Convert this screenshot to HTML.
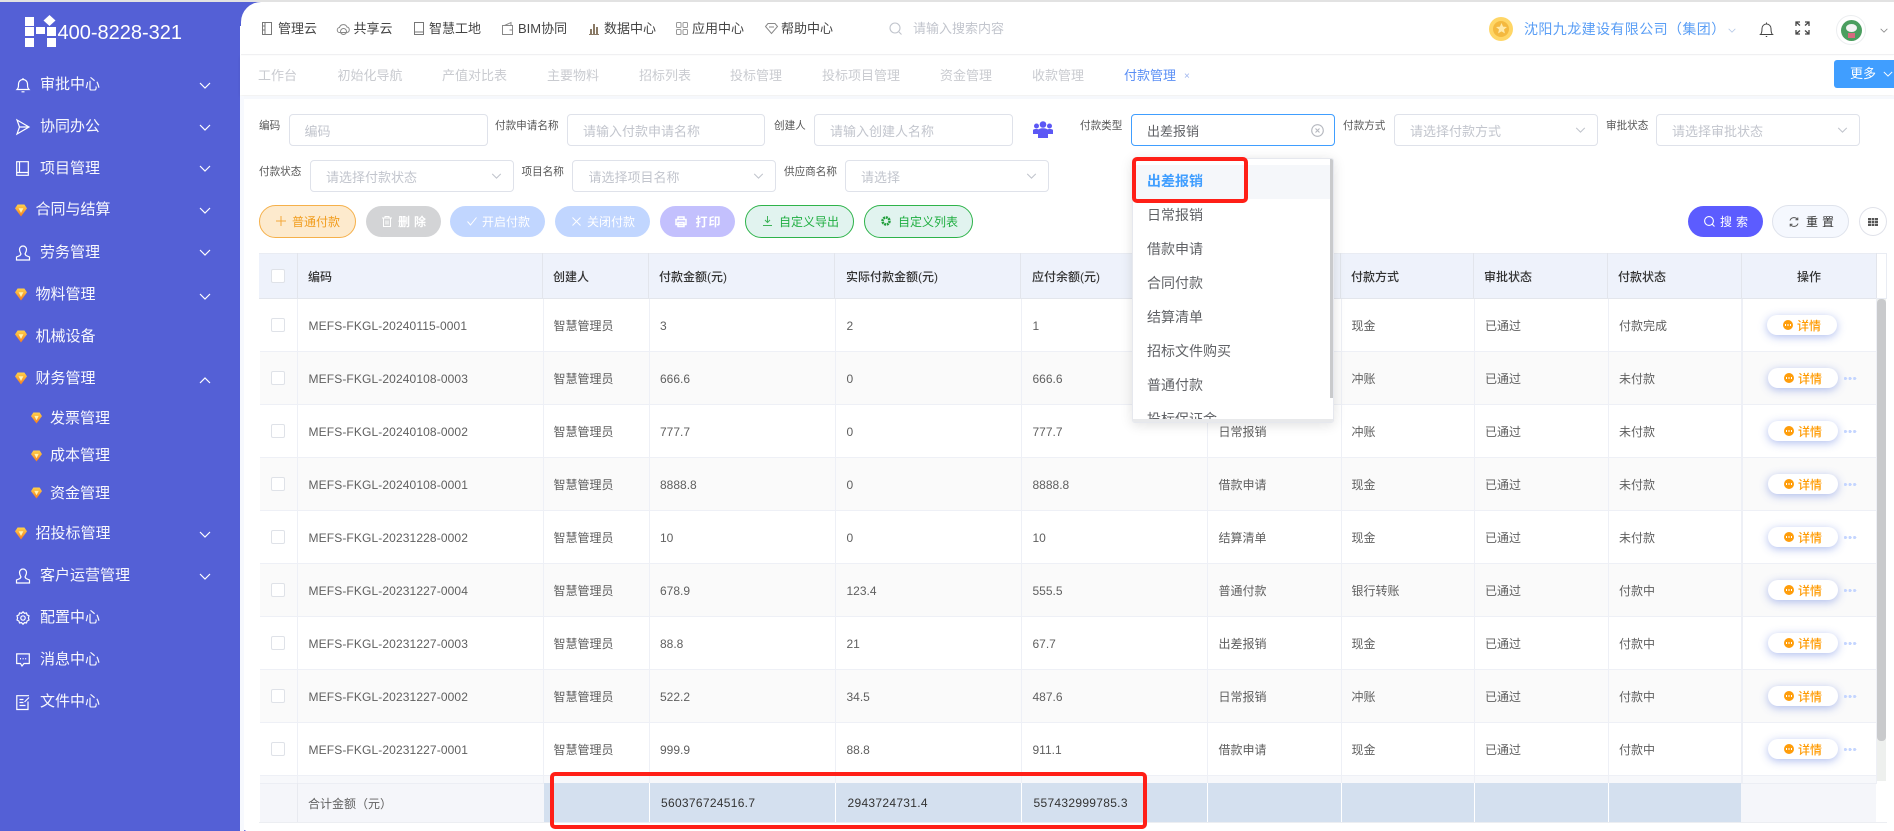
<!DOCTYPE html>
<html lang="zh-CN"><head><meta charset="utf-8"><title>付款管理</title>
<style>
*{box-sizing:border-box}
html,body{margin:0;padding:0;width:1894px;height:831px;overflow:hidden;background:#fff;font-family:"Liberation Sans","Noto Sans CJK SC",sans-serif}
.a{position:absolute}
.t{position:absolute;white-space:nowrap;line-height:20px;height:20px}
.side{left:0;top:2px;width:240px;height:829px;background:#5460d6}
.n{color:#fff;font-size:15px;opacity:.96}
svg{position:absolute;overflow:visible;fill:none}
.h{font-size:13px;color:#444;top:18.5px}
.tb{font-size:13px;color:#c9cbd0;top:66px}
.l{font-size:10.6px;color:#555}
.i{position:absolute;height:32px;border:1px solid #dfe2ea;border-radius:4px;background:#fff}
.p{font-size:13px;color:#c2c5cd}
.b{position:absolute;border-radius:17px}
.bt{font-size:12px}
.r{position:absolute;left:260px;width:1616px;height:53px;border-bottom:1px solid #eef0f6}
.o{background:#fff}.e{background:#fafafa}
.d{font-size:12px;color:#5f5f5f}
.th{font-size:12px;color:#333;font-weight:500;top:267px}
.vl{position:absolute;width:1px;top:298px;height:485px;background:#eef0f6}
.hl{position:absolute;width:1px;top:253px;height:45px;background:#e2e5ec}
.sl{position:absolute;width:1px;top:783px;height:39px;background:#fff}
.cb{position:absolute;left:271px;width:14px;height:14px;border:1px solid #dfe2e8;border-radius:2px;background:#fff}
.db{position:absolute;left:1768px;width:70px;height:20px;border-radius:10px;background:#fff;box-shadow:0 2px 9px rgba(80,110,220,.45)}
.dot{position:absolute;left:16px;top:5px;width:10px;height:10px;border-radius:50%;background:#ff9d0a}
.dot:after{content:"";position:absolute;left:2px;top:4px;width:6px;height:2px;background:repeating-linear-gradient(90deg,#fff 0 1px,transparent 1px 2.5px)}
.dt{position:absolute;left:30px;top:1px;line-height:20px;font-size:12px;color:#ff9a00;font-weight:500;white-space:nowrap}
.more{position:absolute;left:1844px;width:13px;height:3px;background:radial-gradient(circle at 1.5px 1.5px,#c4d5ff 1.5px,transparent 1.6px) 0 0/4.6px 3px repeat-x}
.dd{font-size:14px;color:#606266;left:14px}
</style></head><body>
<svg width="0" height="0" style="position:absolute"><defs>
<linearGradient id="g" x1="0" y1="0" x2="0" y2="1"><stop offset="0" stop-color="#ffd24a"/><stop offset="1" stop-color="#f57c1f"/></linearGradient>
<symbol id="gem" viewBox="0 0 12 13"><path d="M2.6 0.5h6.8L12 4.4 6 12.5 0 4.4z" fill="url(#g)"/><path d="M3.6 4.2h4.8L6 9z" fill="#fff3b0"/></symbol>
<symbol id="chev" viewBox="0 0 12 7"><path d="M1 1l5 5 5-5" stroke="currentColor" stroke-width="1.2" fill="none"/></symbol>
</defs></svg>

<div class="a" style="left:0;top:0;width:1894px;height:2px;background:#e2e2e2"></div>
<div class="a side"></div>
<div class="a" style="left:240px;top:2px;width:24px;height:24px;background:#5460d6"></div>
<div class="a" style="left:240px;top:820px;width:6px;height:11px;background:#5460d6"></div>
<div class="a" style="left:240px;top:815px;width:10px;height:16px;background:#fff;border-radius:0 0 0 8px"></div>

<!-- logo -->
<svg style="left:25px;top:15px" width="31" height="32" viewBox="0 0 31 32"><g fill="#fff">
<rect x="0" y="2" width="9" height="9"/><rect x="0" y="12" width="9" height="9"/><rect x="0" y="23" width="9" height="9"/>
<rect x="11" y="12" width="9" height="7"/><rect x="22" y="12" width="9" height="9"/><rect x="22" y="23" width="9" height="9"/>
<path d="M24.500 0l6 5.500-6 5.500-6-5.500z"/></g></svg>
<div class="t" style="left:57.500px;top:21px;font-size:20px;line-height:24px;height:24px;color:#fff">400-8228-321</div>

<!-- nav -->
<div class="a" style="left:0;top:1px;width:240px;height:720px">
<svg style="left:16px;top:76px" width="14" height="16" viewBox="0 0 14 16" stroke="#fff" stroke-width="1.200"><path d="M1 12.500c1.500-1.500 1.500-3 1.500-5.500a4.500 4.500 0 0 1 9 0c0 2.500 0 4 1.500 5.500z"/><path d="M5.500 14.800h3M7 1v1"/></svg>
<div class="t n" style="left:40px;top:74px">审批中心</div>
<svg style="left:16px;top:118px" width="14" height="16" viewBox="0 0 14 16" stroke="#fff" stroke-width="1.200"><path d="M1 1l12 7-12 7 2.500-7zM3.500 8H13"/></svg>
<div class="t n" style="left:40px;top:116px">协同办公</div>
<svg style="left:16px;top:160px" width="13" height="15" viewBox="0 0 13 15" stroke="#fff" stroke-width="1.200"><path d="M.7.700h11.600v13.600H.7zM.7 11.500h11.600M3.500.7v10.800"/></svg>
<div class="t n" style="left:40px;top:157.500px">项目管理</div>
<svg style="left:15px;top:203px" width="12" height="13"><use href="#gem"/></svg>
<div class="t n" style="left:35.500px;top:199px">合同与结算</div>
<svg style="left:15px;top:244px" width="16" height="16" viewBox="0 0 16 16" stroke="#fff" stroke-width="1.200"><path d="M8 1a3.500 3.500 0 0 1 3.500 3.500c0 2-1 3.500-1.500 4.500l1 1.500 3.500 1.500v3H1.500v-3l3.500-1.500 1-1.500c-.5-1-1.500-2.500-1.500-4.500A3.500 3.500 0 0 1 8 1z"/></svg>
<div class="t n" style="left:40px;top:241.500px">劳务管理</div>
<svg style="left:15px;top:287px" width="12" height="13"><use href="#gem"/></svg>
<div class="t n" style="left:35.500px;top:283.500px">物料管理</div>
<svg style="left:15px;top:329px" width="12" height="13"><use href="#gem"/></svg>
<div class="t n" style="left:35.500px;top:325.500px">机械设备</div>
<svg style="left:15px;top:371px" width="12" height="13"><use href="#gem"/></svg>
<div class="t n" style="left:35.500px;top:367.500px">财务管理</div>
<svg style="left:30.500px;top:411px" width="11" height="12"><use href="#gem"/></svg>
<div class="t n" style="left:50px;top:407.500px">发票管理</div>
<svg style="left:30.500px;top:449px" width="11" height="12"><use href="#gem"/></svg>
<div class="t n" style="left:50px;top:445px">成本管理</div>
<svg style="left:30.500px;top:486px" width="11" height="12"><use href="#gem"/></svg>
<div class="t n" style="left:50px;top:482.500px">资金管理</div>
<svg style="left:15px;top:526px" width="12" height="13"><use href="#gem"/></svg>
<div class="t n" style="left:35.500px;top:522.500px">招投标管理</div>
<svg style="left:15px;top:567px" width="16" height="16" viewBox="0 0 16 16" stroke="#fff" stroke-width="1.200"><path d="M8 1a3.500 3.500 0 0 1 3.500 3.500c0 2-1 3.500-1.500 4.500l1 1.500 3.500 1.500v3H1.500v-3l3.500-1.500 1-1.500c-.5-1-1.500-2.500-1.500-4.500A3.500 3.500 0 0 1 8 1z"/></svg>
<div class="t n" style="left:40px;top:565px">客户运营管理</div>
<svg style="left:16px;top:610px" width="14" height="14" viewBox="0 0 14 14" stroke="#fff" stroke-width="1.200"><path d="M7 .8l1.500 1.500 2-.4.6 2 1.900.9-.6 2.200.6 2-1.900 1-.6 1.900-2-.3L7 13.200l-1.500-1.600-2 .3-.6-1.900-1.900-1 .6-2-.6-2.200 1.900-.9.6-2 2 .4z"/><circle cx="7" cy="7" r="2.200"/></svg>
<div class="t n" style="left:40px;top:607px">配置中心</div>
<svg style="left:16px;top:652px" width="14" height="14" viewBox="0 0 14 14" stroke="#fff" stroke-width="1.200"><path d="M.7.900h12.600v9.600H8l-2 2.500-1.500-2.500H.7z"/><path d="M4 5.700h1M6.600 5.700h1M9.200 5.700h1" stroke-width="1.400"/></svg>
<div class="t n" style="left:40px;top:649px">消息中心</div>
<svg style="left:16px;top:694px" width="14" height="15" viewBox="0 0 14 15" stroke="#fff" stroke-width="1.200"><path d="M12 6.500v8H.8V.7H13M3.500 4.500h4M3.500 7.500h4M3.500 10.500h6M8.500 7l4.500-4.500"/></svg>
<div class="t n" style="left:40px;top:691px">文件中心</div>
<svg style="left:199px;top:81px;color:#fff" width="12" height="7"><use href="#chev"/></svg>
<svg style="left:199px;top:123px;color:#fff" width="12" height="7"><use href="#chev"/></svg>
<svg style="left:199px;top:164px;color:#fff" width="12" height="7"><use href="#chev"/></svg>
<svg style="left:199px;top:206px;color:#fff" width="12" height="7"><use href="#chev"/></svg>
<svg style="left:199px;top:248px;color:#fff" width="12" height="7"><use href="#chev"/></svg>
<svg style="left:199px;top:292px;color:#fff" width="12" height="7"><use href="#chev"/></svg>
<svg style="left:199px;top:376px;color:#fff;transform:rotate(180deg)" width="12" height="7"><use href="#chev"/></svg>
<svg style="left:199px;top:530px;color:#fff" width="12" height="7"><use href="#chev"/></svg>
<svg style="left:199px;top:572px;color:#fff" width="12" height="7"><use href="#chev"/></svg>
</div>

<!-- header -->
<div class="a" style="left:241px;top:2px;width:1653px;height:53px;background:#fff;border-top-left-radius:20px;border-bottom:1px solid #f0f1f3"></div>
<svg style="left:262px;top:22px" width="10" height="13" viewBox="0 0 10 13" stroke="#777"><path d="M.5.500h9v12h-9zM3 .5v12M.5 4h2M.5 8h2"/></svg>
<div class="t h" style="left:278px">管理云</div>
<svg style="left:337px;top:22px" width="13" height="13" viewBox="0 0 13 13" stroke="#888"><path d="M3 10.500a2.500 2.500 0 0 1-.5-5A4 4 0 0 1 10 5a2.800 2.800 0 0 1 0 5.500z"/><circle cx="6.500" cy="9.500" r="3"/></svg>
<div class="t h" style="left:353.500px">共享云</div>
<svg style="left:414px;top:22px" width="10" height="13" viewBox="0 0 10 13" stroke="#777"><path d="M.5.500h9v12h-9zM.5 10h9"/></svg>
<div class="t h" style="left:429px">智慧工地</div>
<svg style="left:502px;top:22px" width="11" height="13" viewBox="0 0 11 13" stroke="#888"><path d="M.5 3.500h10v9H.5zM2.500 3.500L9 .5v3M7.500 8h3"/></svg>
<div class="t h" style="left:518px">BIM协同</div>
<svg style="left:589px;top:23px" width="10" height="12" viewBox="0 0 10 12"><path d="M0 11h10v1H0zM1 6h2v5H1zM4 1h2v10H4zM7 4h2v7H7z" fill="#8a7a66"/></svg>
<div class="t h" style="left:604px">数据中心</div>
<svg style="left:676px;top:22px" width="12" height="13" viewBox="0 0 12 13" stroke="#999"><rect x=".5" y=".5" width="4.500" height="5" rx="1"/><rect x="7" y=".5" width="4.500" height="5" rx="1"/><rect x=".5" y="7.500" width="4.500" height="5" rx="1"/><rect x="7" y="7.500" width="4.500" height="5" rx="1"/></svg>
<div class="t h" style="left:692px">应用中心</div>
<svg style="left:765px;top:23px" width="13" height="11" viewBox="0 0 13 11" stroke="#888"><path d="M3 .5h7l2.500 3L6.500 10.500.5 3.500zM4 4h5"/></svg>
<div class="t h" style="left:781px">帮助中心</div>
<svg style="left:889px;top:22px" width="13" height="13" viewBox="0 0 13 13" stroke="#c0c4cc" stroke-width="1.100"><circle cx="6" cy="6" r="5"/><path d="M10 10l2.500 2.500"/></svg>
<div class="t p" style="left:913px;top:19px">请输入搜索内容</div>
<div class="a" style="left:1489px;top:17px;width:24px;height:24px;border-radius:50%;background:#ffd666"></div>
<div class="a" style="left:1493px;top:21px;width:16px;height:16px;border-radius:50%;background:#f4b93f"></div>
<svg style="left:1496px;top:23px" width="11" height="11" viewBox="0 0 11 11"><path d="M5.500 0l1.600 3.600 3.900.4-3 2.500.9 3.900-3.400-2-3.400 2 .9-3.900-3-2.500 3.900-.4z" fill="#ffe9a8"/></svg>
<div class="t" style="left:1524px;top:19px;font-size:14px;color:#5a9ef5;letter-spacing:.4px">沈阳九龙建设有限公司（集团）</div>
<svg style="left:1728px;top:28px;color:#b5c8e6" width="8" height="5"><use href="#chev"/></svg>
<svg style="left:1760px;top:22px" width="13" height="15" viewBox="0 0 13 15" stroke="#444"><path d="M.5 12.500c1.300-1 1.500-2.500 1.500-6a4.500 4.500 0 0 1 9 0c0 3.500.2 5 1.500 6zM5.800 14.500h1.400M6.500.5v1"/></svg>
<svg style="left:1795px;top:21px" width="15" height="14" viewBox="0 0 15 14" stroke="#444" stroke-width="1.300"><path d="M1 5V1h4M10 1h4v4M1 9v4h4M10 13h4V9M1.500 1.500l3.500 3M13.500 1.500L10 4.500M1.500 12.500l3.500-3M13.500 12.500L10 9.500"/></svg>
<div class="a" style="left:1836px;top:15px;width:30px;height:30px;border-radius:50%;border:1px solid #eceef0;background:#fff"></div>
<div class="a" style="left:1841px;top:20px;width:21px;height:21px;border-radius:50%;background:#4b9e5f"></div>
<div class="a" style="left:1846px;top:24px;width:11px;height:8px;border-radius:50%;background:#f4f4f4"></div>
<div class="a" style="left:1848px;top:33px;width:7px;height:5px;background:#d86a80"></div>
<svg style="left:1880px;top:28px;color:#888" width="8" height="5"><use href="#chev"/></svg>

<!-- tabs -->
<div class="a" style="left:240px;top:56px;width:1654px;height:39px;background:#fff;box-shadow:0 1px 3px rgba(0,0,0,.08)"></div>
<div class="a" style="left:240px;top:96px;width:1654px;height:3px;background:#f6f8fc"></div>
<div class="a" style="left:240px;top:96px;width:4px;height:735px;background:#f7f9fe"></div>
<div class="t tb" style="left:258px">工作台</div>
<div class="t tb" style="left:337.500px">初始化导航</div>
<div class="t tb" style="left:442px">产值对比表</div>
<div class="t tb" style="left:547px">主要物料</div>
<div class="t tb" style="left:639px">招标列表</div>
<div class="t tb" style="left:730px">投标管理</div>
<div class="t tb" style="left:822px">投标项目管理</div>
<div class="t tb" style="left:940px">资金管理</div>
<div class="t tb" style="left:1032px">收款管理</div>
<div class="t tb" style="left:1124px;color:#5b8ff5">付款管理</div>
<div class="t" style="left:1184px;top:66.500px;font-size:10px;color:#9db4ee">×</div>
<div class="a" style="left:1834px;top:60px;width:60px;height:28px;background:#409eff;border-radius:3px 0 0 3px"></div>
<div class="t" style="left:1850px;top:64px;font-size:13px;color:#fff">更多</div>
<svg style="left:1883px;top:71px;color:#fff" width="10" height="6"><use href="#chev"/></svg>

<!-- filter row 1 -->
<div class="t l" style="left:259px;top:116px">编码</div>
<div class="i" style="left:289px;top:114px;width:199px"></div>
<div class="t p" style="left:304.500px;top:122px">编码</div>
<div class="t l" style="left:495px;top:116px">付款申请名称</div>
<div class="i" style="left:567px;top:114px;width:198px"></div>
<div class="t p" style="left:583px;top:122px">请输入付款申请名称</div>
<div class="t l" style="left:774px;top:116px">创建人</div>
<div class="i" style="left:814px;top:114px;width:199px"></div>
<div class="t p" style="left:830px;top:122px">请输入创建人名称</div>
<svg style="left:1033px;top:121px" width="20" height="17" viewBox="0 0 20 17"><g fill="#5c58f5"><circle cx="10" cy="3.500" r="3.300"/><circle cx="3.500" cy="5" r="2.500"/><circle cx="16.500" cy="5" r="2.500"/><path d="M0 9.500C0 8 2 8 3.500 8s3 .5 3 1.500V13H0zM13.500 9.500c0-1 1.500-1.500 3-1.500S20 8 20 9.500V13h-6.500z"/><path d="M5 10c0-2 2-2.700 5-2.700s5 .7 5 2.700v7H5z"/></g></svg>
<div class="t l" style="left:1080px;top:116px">付款类型</div>
<div class="i" style="left:1131px;top:114px;width:204px;border-color:#409eff"></div>
<div class="t" style="left:1147px;top:122px;font-size:13px;color:#606266">出差报销</div>
<svg style="left:1311px;top:124px" width="13" height="13" viewBox="0 0 13 13" stroke="#b5b8bf" stroke-width="1.100"><circle cx="6.500" cy="6.500" r="5.800"/><path d="M4.500 4.500l4 4M8.500 4.500l-4 4"/></svg>
<div class="t l" style="left:1343px;top:116px">付款方式</div>
<div class="i" style="left:1394px;top:114px;width:204px"></div>
<div class="t p" style="left:1410px;top:122px">请选择付款方式</div>
<svg style="left:1575px;top:127px;color:#c0c4cc" width="11" height="6"><use href="#chev"/></svg>
<div class="t l" style="left:1606px;top:116px">审批状态</div>
<div class="i" style="left:1656px;top:114px;width:204px"></div>
<div class="t p" style="left:1672px;top:122px">请选择审批状态</div>
<svg style="left:1837px;top:127px;color:#c0c4cc" width="11" height="6"><use href="#chev"/></svg>

<!-- filter row 2 -->
<div class="t l" style="left:259px;top:162px">付款状态</div>
<div class="i" style="left:310px;top:160px;width:204px"></div>
<div class="t p" style="left:326px;top:167.500px">请选择付款状态</div>
<svg style="left:491px;top:173px;color:#c0c4cc" width="11" height="6"><use href="#chev"/></svg>
<div class="t l" style="left:521.500px;top:162px">项目名称</div>
<div class="i" style="left:572px;top:160px;width:204px"></div>
<div class="t p" style="left:588.500px;top:167.500px">请选择项目名称</div>
<svg style="left:752.500px;top:173px;color:#c0c4cc" width="11" height="6"><use href="#chev"/></svg>
<div class="t l" style="left:784px;top:162px">供应商名称</div>
<div class="i" style="left:845px;top:160px;width:204px"></div>
<div class="t p" style="left:861px;top:167.500px">请选择</div>
<svg style="left:1026px;top:173px;color:#c0c4cc" width="11" height="6"><use href="#chev"/></svg>

<!-- buttons -->
<div class="b" style="left:259px;top:205px;width:97px;height:33px;background:#fdeacd;border:1px solid #f5b04a"></div>
<svg style="left:276px;top:216px" width="10" height="10" viewBox="0 0 10 10" stroke="#f3a83a"><path d="M5 0v10M0 5h10"/></svg>
<div class="t bt" style="left:292px;top:212px;color:#f19d1e">普通付款</div>
<div class="b" style="left:366px;top:206px;width:75px;height:31px;background:#d3d4d6"></div>
<svg style="left:382px;top:216px" width="10" height="11" viewBox="0 0 10 11" stroke="#fff"><path d="M0 2h10M3 2V.5h4V2M1.500 2v8.500h7V2M4 4.500v4M6 4.500v4"/></svg>
<div class="t bt" style="left:398px;top:212px;color:#fff;letter-spacing:4px;font-weight:700">删除</div>
<div class="b" style="left:450px;top:206px;width:95px;height:31px;background:#c1d6ff"></div>
<svg style="left:467px;top:217px" width="10" height="9" viewBox="0 0 10 9" stroke="#fff"><path d="M.5 4.500l3 3.500L9.500.5"/></svg>
<div class="t bt" style="left:482px;top:212px;color:#fff">开启付款</div>
<div class="b" style="left:555px;top:206px;width:95px;height:31px;background:#c1d6ff"></div>
<svg style="left:572px;top:217px" width="9" height="9" viewBox="0 0 9 9" stroke="#fff"><path d="M.5.500l8 8M8.500.500l-8 8"/></svg>
<div class="t bt" style="left:587px;top:212px;color:#fff">关闭付款</div>
<div class="b" style="left:660px;top:206px;width:75px;height:31px;background:#c3c0fd"></div>
<svg style="left:675px;top:216px" width="12" height="11" viewBox="0 0 12 11" stroke="#fff" stroke-width="1.500"><path d="M3 3V1h6v2M1 3.500h10v5H1zM3 6.500h6v4H3z"/></svg>
<div class="t bt" style="left:695.500px;top:212px;color:#fff;letter-spacing:1px;font-weight:700">打印</div>
<div class="b" style="left:745px;top:205px;width:109px;height:33px;background:#e1f3ef;border:1px solid #2eb34a"></div>
<svg style="left:763px;top:216px" width="9" height="10" viewBox="0 0 9 10" stroke="#3fb35a"><path d="M4.500 0v6M2 4l2.500 2.500L7 4M0 9.500h9"/></svg>
<div class="t bt" style="left:779px;top:212px;color:#1fae41">自定义导出</div>
<div class="b" style="left:864px;top:205px;width:109px;height:33px;background:#e1f3ef;border:1px solid #2eb34a"></div>
<svg style="left:881px;top:216px" width="10" height="10" viewBox="0 0 10 10"><circle cx="5" cy="5" r="3.500" stroke="#1f9e3a" stroke-width="2.500" stroke-dasharray="2 .7"/></svg>
<div class="t bt" style="left:898px;top:212px;color:#1fae41">自定义列表</div>
<div class="b" style="left:1688px;top:206px;width:75px;height:31px;background:#5c5cff"></div>
<svg style="left:1704px;top:216px" width="11" height="11" viewBox="0 0 11 11" stroke="#fff" stroke-width="1.100"><circle cx="5" cy="5" r="4.400"/><path d="M8.300 8.300L10.500 10.500"/></svg>
<div class="t bt" style="left:1720px;top:212px;color:#fff;letter-spacing:4px">搜索</div>
<div class="b" style="left:1772px;top:205px;width:77px;height:33px;background:#f5f8fe;border:1px solid #dfe3ec"></div>
<svg style="left:1789px;top:217px" width="10" height="10" viewBox="0 0 10 10" stroke="#555"><path d="M1 3.500A4.200 4.200 0 0 1 8.500 2.500M9 6.500A4.200 4.200 0 0 1 1.500 7.500M8.800 .5v2.300H6.500M1.200 9.500V7.200h2.300"/></svg>
<div class="t bt" style="left:1806px;top:212px;color:#333;letter-spacing:4px">重置</div>
<div class="a" style="left:1859px;top:207px;width:28px;height:29px;border-radius:50%;border:1px solid #e0e2ea;background:#fff"></div>
<svg style="left:1868px;top:218px" width="10" height="8" viewBox="0 0 10 8"><path d="M0 0h10v8H0z" fill="#555"/><path d="M3.300 0v8M6.600 0v8M0 2.700h10M0 5.300h10" stroke="#fff" stroke-width=".6"/></svg>

<!-- table header -->
<div class="a" style="left:259px;top:253px;width:1617px;height:46px;background:#eef2fb;border-top:1px solid #e9ecf3;border-bottom:1px solid #e3e6ec"></div>
<div class="a" style="left:1876px;top:253px;width:11px;height:46px;border:1px solid #e9ecf3;border-left:0;background:#fff"></div>
<div class="hl" style="left:297px"></div><div class="hl" style="left:542px"></div><div class="hl" style="left:648px"></div><div class="hl" style="left:834px"></div><div class="hl" style="left:1020px"></div><div class="hl" style="left:1207px"></div><div class="hl" style="left:1340px"></div><div class="hl" style="left:1473px"></div><div class="hl" style="left:1607px"></div><div class="hl" style="left:1741px"></div><div class="hl" style="left:1876px"></div>
<div class="cb" style="top:269px"></div>
<div class="t th" style="left:308px">编码</div>
<div class="t th" style="left:553px">创建人</div>
<div class="t th" style="left:659px">付款金额(元)</div>
<div class="t th" style="left:846px">实际付款金额(元)</div>
<div class="t th" style="left:1032px">应付余额(元)</div>
<div class="t th" style="left:1351px">付款方式</div>
<div class="t th" style="left:1484px">审批状态</div>
<div class="t th" style="left:1618px">付款状态</div>
<div class="t th" style="left:1797px">操作</div>

<!-- rows -->
<div class="r o" style="top:299px"></div>
<div class="r e" style="top:352px"></div>
<div class="r o" style="top:405px"></div>
<div class="r e" style="top:458px"></div>
<div class="r o" style="top:511px"></div>
<div class="r e" style="top:564px"></div>
<div class="r o" style="top:617px"></div>
<div class="r e" style="top:670px"></div>
<div class="r o" style="top:723px"></div>
<div class="a" style="left:260px;top:776px;width:1616px;height:7px;background:#f7f8fb"></div>
<div class="vl" style="left:297px;top:299px"></div><div class="vl" style="left:543px;top:299px"></div><div class="vl" style="left:649px;top:299px"></div><div class="vl" style="left:835px;top:299px"></div><div class="vl" style="left:1021px;top:299px"></div><div class="vl" style="left:1207px;top:299px"></div><div class="vl" style="left:1341px;top:299px"></div><div class="vl" style="left:1474px;top:299px"></div><div class="vl" style="left:1608px;top:299px"></div><div class="vl" style="left:1741px;top:299px;width:2px"></div><div class="vl" style="left:1876px;top:299px"></div>
<div class="cb" style="top:318px"></div><div class="cb" style="top:371px"></div><div class="cb" style="top:424px"></div><div class="cb" style="top:477px"></div><div class="cb" style="top:530px"></div><div class="cb" style="top:583px"></div><div class="cb" style="top:636px"></div><div class="cb" style="top:689px"></div><div class="cb" style="top:742px"></div>

<div class="t d" style="left:308.500px;top:315.500px;letter-spacing:.12px">MEFS-FKGL-20240115-0001</div><div class="t d" style="left:553.500px;top:315.500px">智慧管理员</div><div class="t d" style="left:660px;top:315.500px">3</div><div class="t d" style="left:846.500px;top:315.500px">2</div><div class="t d" style="left:1032.500px;top:315.500px">1</div><div class="t d" style="left:1351.500px;top:315.500px">现金</div><div class="t d" style="left:1485px;top:315.500px">已通过</div><div class="t d" style="left:1619px;top:315.500px">付款完成</div>
<div class="t d" style="left:308.500px;top:368.500px;letter-spacing:.12px">MEFS-FKGL-20240108-0003</div><div class="t d" style="left:553.500px;top:368.500px">智慧管理员</div><div class="t d" style="left:660px;top:368.500px">666.6</div><div class="t d" style="left:846.500px;top:368.500px">0</div><div class="t d" style="left:1032.500px;top:368.500px">666.6</div><div class="t d" style="left:1351.500px;top:368.500px">冲账</div><div class="t d" style="left:1485px;top:368.500px">已通过</div><div class="t d" style="left:1619px;top:368.500px">未付款</div>
<div class="t d" style="left:308.500px;top:421.500px;letter-spacing:.12px">MEFS-FKGL-20240108-0002</div><div class="t d" style="left:553.500px;top:421.500px">智慧管理员</div><div class="t d" style="left:660px;top:421.500px">777.7</div><div class="t d" style="left:846.500px;top:421.500px">0</div><div class="t d" style="left:1032.500px;top:421.500px">777.7</div><div class="t d" style="left:1218.500px;top:421.500px">日常报销</div><div class="t d" style="left:1351.500px;top:421.500px">冲账</div><div class="t d" style="left:1485px;top:421.500px">已通过</div><div class="t d" style="left:1619px;top:421.500px">未付款</div>
<div class="t d" style="left:308.500px;top:474.500px;letter-spacing:.12px">MEFS-FKGL-20240108-0001</div><div class="t d" style="left:553.500px;top:474.500px">智慧管理员</div><div class="t d" style="left:660px;top:474.500px">8888.8</div><div class="t d" style="left:846.500px;top:474.500px">0</div><div class="t d" style="left:1032.500px;top:474.500px">8888.8</div><div class="t d" style="left:1218.500px;top:474.500px">借款申请</div><div class="t d" style="left:1351.500px;top:474.500px">现金</div><div class="t d" style="left:1485px;top:474.500px">已通过</div><div class="t d" style="left:1619px;top:474.500px">未付款</div>
<div class="t d" style="left:308.500px;top:527.500px;letter-spacing:.12px">MEFS-FKGL-20231228-0002</div><div class="t d" style="left:553.500px;top:527.500px">智慧管理员</div><div class="t d" style="left:660px;top:527.500px">10</div><div class="t d" style="left:846.500px;top:527.500px">0</div><div class="t d" style="left:1032.500px;top:527.500px">10</div><div class="t d" style="left:1218.500px;top:527.500px">结算清单</div><div class="t d" style="left:1351.500px;top:527.500px">现金</div><div class="t d" style="left:1485px;top:527.500px">已通过</div><div class="t d" style="left:1619px;top:527.500px">未付款</div>
<div class="t d" style="left:308.500px;top:580.500px;letter-spacing:.12px">MEFS-FKGL-20231227-0004</div><div class="t d" style="left:553.500px;top:580.500px">智慧管理员</div><div class="t d" style="left:660px;top:580.500px">678.9</div><div class="t d" style="left:846.500px;top:580.500px">123.4</div><div class="t d" style="left:1032.500px;top:580.500px">555.5</div><div class="t d" style="left:1218.500px;top:580.500px">普通付款</div><div class="t d" style="left:1351.500px;top:580.500px">银行转账</div><div class="t d" style="left:1485px;top:580.500px">已通过</div><div class="t d" style="left:1619px;top:580.500px">付款中</div>
<div class="t d" style="left:308.500px;top:633.500px;letter-spacing:.12px">MEFS-FKGL-20231227-0003</div><div class="t d" style="left:553.500px;top:633.500px">智慧管理员</div><div class="t d" style="left:660px;top:633.500px">88.8</div><div class="t d" style="left:846.500px;top:633.500px">21</div><div class="t d" style="left:1032.500px;top:633.500px">67.7</div><div class="t d" style="left:1218.500px;top:633.500px">出差报销</div><div class="t d" style="left:1351.500px;top:633.500px">现金</div><div class="t d" style="left:1485px;top:633.500px">已通过</div><div class="t d" style="left:1619px;top:633.500px">付款中</div>
<div class="t d" style="left:308.500px;top:686.500px;letter-spacing:.12px">MEFS-FKGL-20231227-0002</div><div class="t d" style="left:553.500px;top:686.500px">智慧管理员</div><div class="t d" style="left:660px;top:686.500px">522.2</div><div class="t d" style="left:846.500px;top:686.500px">34.5</div><div class="t d" style="left:1032.500px;top:686.500px">487.6</div><div class="t d" style="left:1218.500px;top:686.500px">日常报销</div><div class="t d" style="left:1351.500px;top:686.500px">冲账</div><div class="t d" style="left:1485px;top:686.500px">已通过</div><div class="t d" style="left:1619px;top:686.500px">付款中</div>
<div class="t d" style="left:308.500px;top:739.500px;letter-spacing:.12px">MEFS-FKGL-20231227-0001</div><div class="t d" style="left:553.500px;top:739.500px">智慧管理员</div><div class="t d" style="left:660px;top:739.500px">999.9</div><div class="t d" style="left:846.500px;top:739.500px">88.8</div><div class="t d" style="left:1032.500px;top:739.500px">911.1</div><div class="t d" style="left:1218.500px;top:739.500px">借款申请</div><div class="t d" style="left:1351.500px;top:739.500px">现金</div><div class="t d" style="left:1485px;top:739.500px">已通过</div><div class="t d" style="left:1619px;top:739.500px">付款中</div>

<!-- detail buttons -->
<div class="db" style="left:1767px;top:315px"><span class="dot"></span><span class="dt">详情</span></div>
<div class="db" style="top:368px"><span class="dot"></span><span class="dt">详情</span></div><div class="more" style="top:377px"></div>
<div class="db" style="top:421px"><span class="dot"></span><span class="dt">详情</span></div><div class="more" style="top:430px"></div>
<div class="db" style="top:474px"><span class="dot"></span><span class="dt">详情</span></div><div class="more" style="top:483px"></div>
<div class="db" style="top:527px"><span class="dot"></span><span class="dt">详情</span></div><div class="more" style="top:536px"></div>
<div class="db" style="top:580px"><span class="dot"></span><span class="dt">详情</span></div><div class="more" style="top:589px"></div>
<div class="db" style="top:633px"><span class="dot"></span><span class="dt">详情</span></div><div class="more" style="top:642px"></div>
<div class="db" style="top:686px"><span class="dot"></span><span class="dt">详情</span></div><div class="more" style="top:695px"></div>
<div class="db" style="top:739px"><span class="dot"></span><span class="dt">详情</span></div><div class="more" style="top:748px"></div>

<!-- table scrollbar -->
<div class="a" style="left:1877px;top:299px;width:9px;height:482px;background:#eef0ee"></div>
<div class="a" style="left:1877px;top:299px;width:9px;height:442px;background:#c9cacc;border-radius:4px"></div>

<!-- summary -->
<div class="a" style="left:260px;top:783px;width:1616px;height:39px;background:#f5f6fa;border-top:1px solid #eceef4"></div>
<div class="a" style="left:544px;top:783px;width:1197px;height:39px;background:#d4e0ef"></div>
<div class="sl" style="left:649px"></div><div class="sl" style="left:835px"></div><div class="sl" style="left:1021px"></div><div class="sl" style="left:1207px"></div><div class="sl" style="left:1341px"></div><div class="sl" style="left:1474px"></div><div class="sl" style="left:1608px"></div>
<div class="a" style="left:297px;top:783px;width:1px;height:39px;background:#e8eaf0"></div>
<div class="a" style="left:259px;top:822px;width:1628px;height:1px;background:#eceef2"></div>
<div class="t d" style="left:308px;top:794px">合计金额（元）</div>
<div class="t" style="left:661px;top:793px;font-size:12px;color:#333;letter-spacing:.3px">560376724516.7</div>
<div class="t" style="left:847.500px;top:793px;font-size:12px;color:#333;letter-spacing:.3px">2943724731.4</div>
<div class="t" style="left:1033.500px;top:793px;font-size:12px;color:#333;letter-spacing:.3px">557432999785.3</div>
<div class="a" style="left:550px;top:772px;width:597px;height:57px;border:4px solid #ff1f17;border-radius:5px"></div>

<!-- dropdown -->
<div class="a" style="left:1132px;top:158px;width:202px;height:265px;background:#fff;border:1px solid #e6e8ee;border-radius:3px;box-shadow:0 2px 12px rgba(0,0,0,.12);overflow:hidden">
  <div class="a" style="left:0;top:6px;width:200px;height:34px;background:#f5f7fa"></div>
  <div class="t dd" style="top:12px;color:#409eff;font-weight:700">出差报销</div>
  <div class="t dd" style="top:46px">日常报销</div>
  <div class="t dd" style="top:80px">借款申请</div>
  <div class="t dd" style="top:114px">合同付款</div>
  <div class="t dd" style="top:148px">结算清单</div>
  <div class="t dd" style="top:182px">招标文件购买</div>
  <div class="t dd" style="top:216px">普通付款</div>
  <div class="t dd" style="top:250px">投标保证金</div>
  <div class="a" style="left:197px;top:0;width:4px;height:239px;background:#c9cacc"></div>
  <div class="a" style="left:0;top:260px;width:200px;height:4px;background:#e8e9eb"></div>
</div>
<div class="a" style="left:1132px;top:157px;width:116px;height:46px;border:4px solid #ff1f17;border-radius:5px"></div>
</body></html>
